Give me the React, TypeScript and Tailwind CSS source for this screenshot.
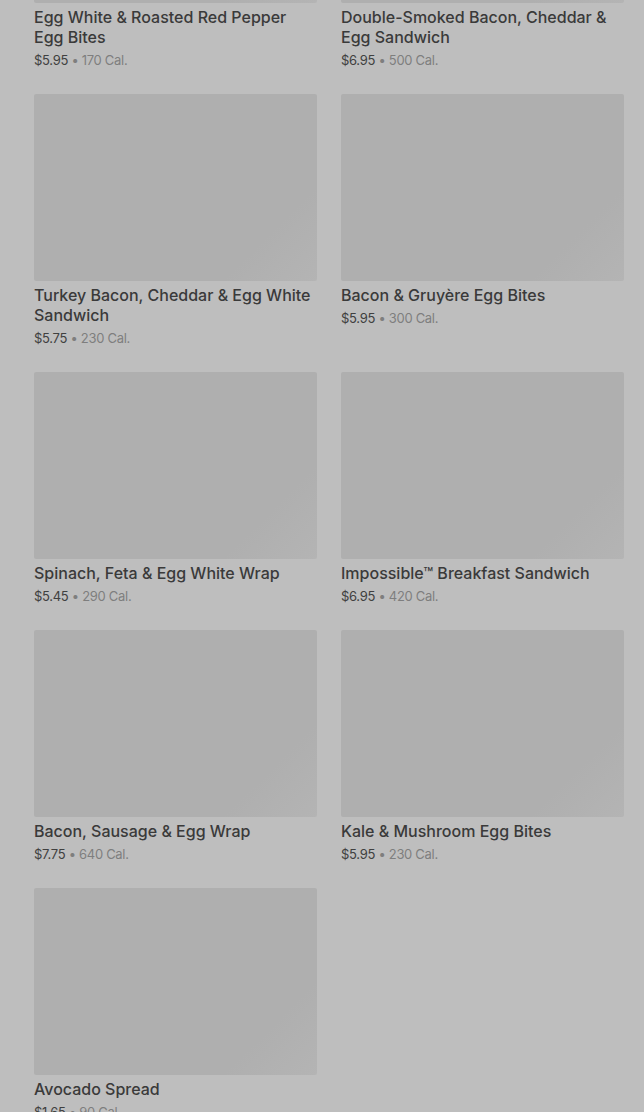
import React from "react";

interface IMenuItem {
    name: string;
    price: string;
    calories: string;
}

const items: IMenuItem[] = [
    { name: "Egg White & Roasted Red Pepper Egg Bites", price: "$5.95", calories: "170 Cal." },
    { name: "Double-Smoked Bacon, Cheddar & Egg Sandwich", price: "$6.95", calories: "500 Cal." },
    { name: "Turkey Bacon, Cheddar & Egg White Sandwich", price: "$5.75", calories: "230 Cal." },
    { name: "Bacon & Gruyère Egg Bites", price: "$5.95", calories: "300 Cal." },
    { name: "Spinach, Feta & Egg White Wrap", price: "$5.45", calories: "290 Cal." },
    { name: "Impossible™ Breakfast Sandwich", price: "$6.95", calories: "420 Cal." },
    { name: "Bacon, Sausage & Egg Wrap", price: "$7.75", calories: "640 Cal." },
    { name: "Kale & Mushroom Egg Bites", price: "$5.95", calories: "230 Cal." },
    { name: "Avocado Spread", price: "$1.65", calories: "90 Cal." },
];

const MenuCard: React.FC<{ item: IMenuItem }> = ({ item }) => {
    return (
        <div className="flex flex-col">
            <div className="h-[187px] w-full rounded-[2px] bg-[linear-gradient(135deg,#afafaf_0%,#afafaf_80%,#b4b4b4_100%)]" />
            <h3 className="mt-1 text-[16px] leading-5 font-medium text-[#3a3a3a]">{item.name}</h3>
            <p className="mt-[4px] text-[13px] leading-[18px] tracking-[-0.3px] text-[#404040]">
                {item.price} <span className="text-[#7e7e7e]">•</span> <span className="text-[#7e7e7e]">{item.calories}</span>
            </p>
        </div>
    );
};

export default function App() {
    return (
        <div className="h-[1112px] w-full overflow-hidden bg-[#bebebe]" style={{ fontFamily: "Inter, Roboto, sans-serif" }}>
            <div className="-mt-[184px] grid grid-cols-2 gap-x-[24px] gap-y-[25px] pl-[34px] pr-[20px]">
                {items.map((item) => (
                    <MenuCard key={item.name} item={item} />
                ))}
            </div>
        </div>
    );
}
